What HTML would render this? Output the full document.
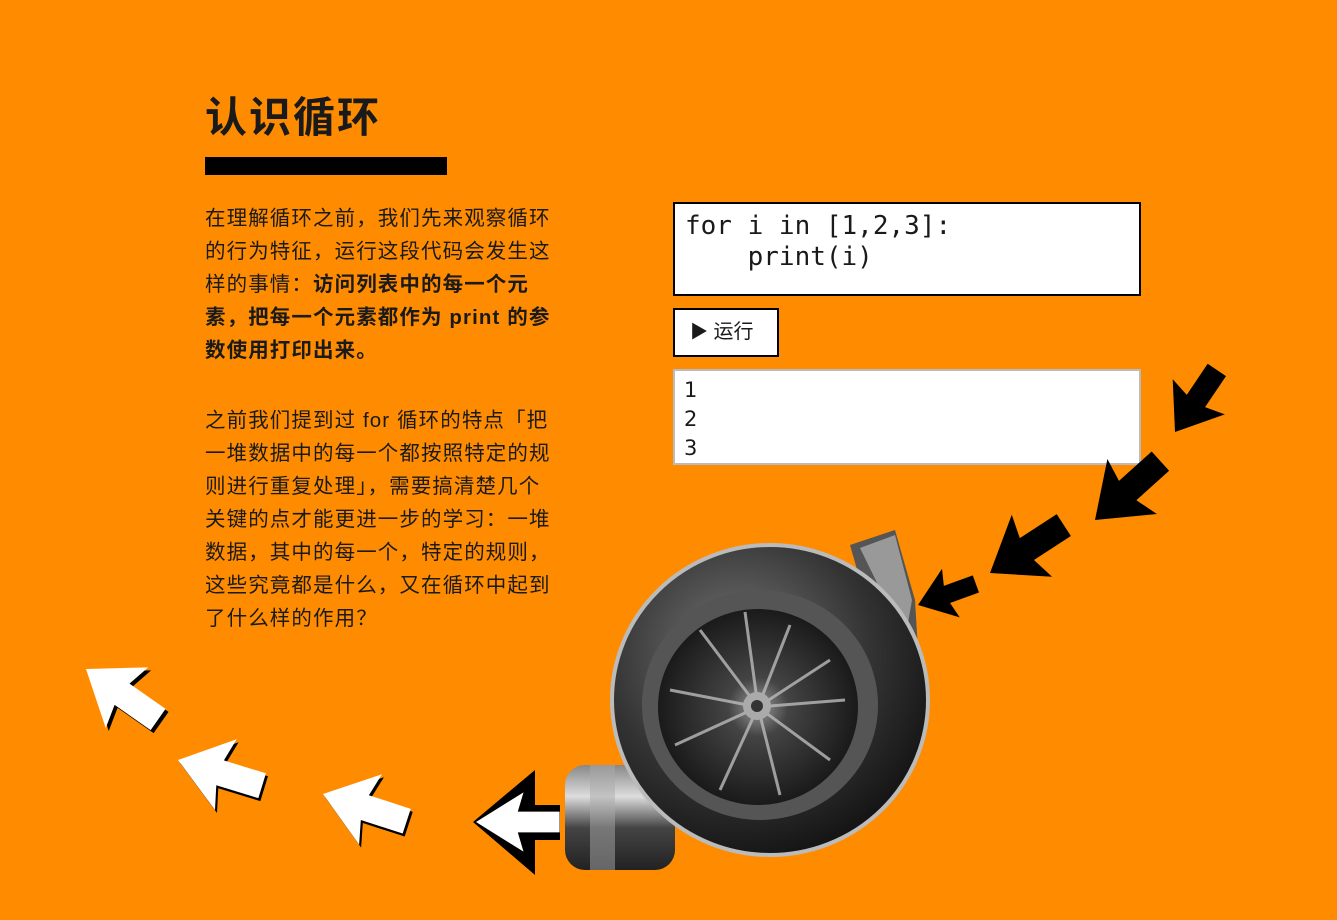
<!DOCTYPE html>
<html><head><meta charset="utf-8"><style>
html,body{margin:0;padding:0}
body{width:1337px;height:920px;background:#FF8C00;position:relative;overflow:hidden;font-family:"Liberation Sans","Noto Sans CJK SC",sans-serif;color:#1a1a1a}
.title{position:absolute;left:205px;top:88px;font-size:42px;font-weight:bold;letter-spacing:2px;line-height:60px}
.bar{position:absolute;left:205px;top:157px;width:242px;height:18px;background:#000}
.p{position:absolute;left:205px;font-size:20.5px;line-height:33px;white-space:nowrap;letter-spacing:1.1px}
.code{position:absolute;left:673px;top:202px;width:464px;height:90px;border:2px solid #000;background:#fff;font-family:"DejaVu Sans Mono","Liberation Mono",monospace;font-size:26px;line-height:31px;padding:0;box-sizing:content-box}
.code pre{margin:7px 0 0 10px;font:inherit}
.btn{position:absolute;left:673px;top:308px;width:102px;height:45px;border:2px solid #000;background:#fff;font-size:20px;line-height:45px;box-sizing:content-box}
.out{position:absolute;left:673px;top:369px;width:464px;height:92px;border:2px solid #bbb;background:#fff;font-family:"DejaVu Sans","Liberation Sans",sans-serif;font-size:21px;line-height:29px}
.out div{padding:5px 0 0 9px}
svg{position:absolute;left:0;top:0}
</style></head><body>
<div class="title">认识循环</div>
<div class="bar"></div>
<div class="p" style="top:202px">在理解循环之前，我们先来观察循环<br>的行为特征，运行这段代码会发生这<br>样的事情：<b>访问列表中的每一个元<br>素，把每一个元素都作为 print 的参<br>数使用打印出来。</b></div>
<div class="p" style="top:404px">之前我们提到过 for 循环的特点「把<br>一堆数据中的每一个都按照特定的规<br>则进行重复处理」，需要搞清楚几个<br>关键的点才能更进一步的学习：一堆<br>数据，其中的每一个，特定的规则，<br>这些究竟都是什么，又在循环中起到<br>了什么样的作用？</div>
<div class="code"><pre>for i in [1,2,3]:
    print(i)</pre></div>
<div class="btn"><span style="margin-left:15px;font-size:18px">▶</span> 运行</div>
<div class="out"><div>1<br>2<br>3</div></div>
<svg width="1337" height="920" viewBox="0 0 1337 920">
<defs>
<path id="ar" d="M0,0 L50,-37 L44,-13 L88,-13 L88,13 L44,13 L50,37 Z"/>
<radialGradient id="g1" cx="0.4" cy="0.35" r="0.7"><stop offset="0" stop-color="#777"/><stop offset="0.6" stop-color="#333"/><stop offset="1" stop-color="#111"/></radialGradient>
<radialGradient id="g2" cx="0.5" cy="0.5" r="0.5"><stop offset="0" stop-color="#999"/><stop offset="0.3" stop-color="#444"/><stop offset="1" stop-color="#1a1a1a"/></radialGradient>
<linearGradient id="pipe" x1="0" y1="0" x2="0" y2="1"><stop offset="0" stop-color="#888"/><stop offset="0.3" stop-color="#ddd"/><stop offset="0.6" stop-color="#444"/><stop offset="1" stop-color="#222"/></linearGradient>
</defs>
<use href="#ar" transform="translate(1175,432) rotate(-56) scale(0.85)" fill="#000"/>
<use href="#ar" transform="translate(1095,520) rotate(-42)" fill="#000"/>
<use href="#ar" transform="translate(990,573) rotate(-33)" fill="#000"/>
<path d="M850,545 L895,530 L915,600 L918,650 L880,650 Z" fill="#555"/>
<path d="M860,548 L895,535 L912,600 L905,640 Z" fill="#999"/>
<rect x="565" y="765" width="110" height="105" rx="20" fill="url(#pipe)"/>
<rect x="590" y="765" width="25" height="105" fill="#aaa" opacity="0.5"/>
<ellipse cx="770" cy="700" rx="158" ry="155" fill="url(#g1)"/>
<ellipse cx="770" cy="700" rx="158" ry="155" fill="none" stroke="#bbb" stroke-width="4"/>
<ellipse cx="760" cy="705" rx="118" ry="115" fill="#555"/>
<ellipse cx="758" cy="707" rx="100" ry="98" fill="url(#g2)"/>
<g stroke="#bbb" stroke-width="3" opacity="0.8">
<line x1="758" y1="707" x2="790" y2="625"/><line x1="758" y1="707" x2="830" y2="660"/><line x1="758" y1="707" x2="845" y2="700"/><line x1="758" y1="707" x2="830" y2="760"/><line x1="758" y1="707" x2="780" y2="795"/><line x1="758" y1="707" x2="720" y2="790"/><line x1="758" y1="707" x2="675" y2="745"/><line x1="758" y1="707" x2="670" y2="690"/><line x1="758" y1="707" x2="700" y2="630"/><line x1="758" y1="707" x2="745" y2="612"/>
</g>
<circle cx="757" cy="706" r="14" fill="#aaa"/><circle cx="757" cy="706" r="6" fill="#333"/>
<use href="#ar" transform="translate(918,605) rotate(-20) scale(0.7)" fill="#000"/>
<use href="#ar" transform="translate(89,672) rotate(35)" fill="#000"/>
<use href="#ar" transform="translate(86,669) rotate(35)" fill="#fff"/>
<use href="#ar" transform="translate(180,763) rotate(17)" fill="#000"/>
<use href="#ar" transform="translate(178,760) rotate(17)" fill="#fff"/>
<use href="#ar" transform="translate(325,797) rotate(18)" fill="#000"/>
<use href="#ar" transform="translate(323,794) rotate(18)" fill="#fff"/>
<path d="M473,822 L535,770 L535,875 Z" fill="#000"/>
<rect x="535" y="805" width="25" height="35" fill="#000"/>
<use href="#ar" transform="translate(476,822) scale(0.95,0.8)" fill="#fff"/>
</svg>
</body></html>
